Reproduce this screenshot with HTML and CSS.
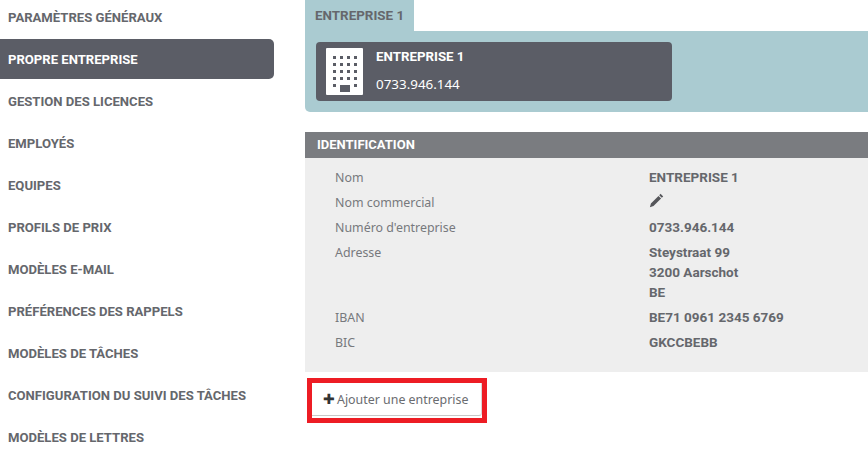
FILE: index.html
```html
<!DOCTYPE html>
<html lang="fr">
<head>
    <meta charset="UTF-8">
    <meta name="viewport" content="width=device-width, initial-scale=1.0">
    <title>Propre entreprise</title>
    <link rel="stylesheet" href="styles.css">
</head>
<body>
    <nav class="sidebar">
        <a class="nav-item">PARAMÈTRES GÉNÉRAUX</a>
        <a class="nav-item active">PROPRE ENTREPRISE</a>
        <a class="nav-item">GESTION DES LICENCES</a>
        <a class="nav-item">EMPLOYÉS</a>
        <a class="nav-item">EQUIPES</a>
        <a class="nav-item">PROFILS DE PRIX</a>
        <a class="nav-item">MODÈLES E-MAIL</a>
        <a class="nav-item">PRÉFÉRENCES DES RAPPELS</a>
        <a class="nav-item">MODÈLES DE TÂCHES</a>
        <a class="nav-item">CONFIGURATION DU SUIVI DES TÂCHES</a>
        <a class="nav-item">MODÈLES DE LETTRES</a>
    </nav>

    <main class="content">
        <div class="tab">ENTREPRISE 1</div>
        <div class="tab-panel">
            <div class="company-card">
                <svg class="building" width="37" height="47" viewBox="0 0 37 47">
                    <rect width="37" height="47" rx="1" fill="#fff"/>
                    <g fill="#5b5d66">
                        <rect x="7" y="8" width="3" height="3"/><rect x="14" y="8" width="3" height="3"/><rect x="21" y="8" width="3" height="3"/><rect x="28" y="8" width="3" height="3"/>
                        <rect x="7" y="15" width="3" height="3"/><rect x="14" y="15" width="3" height="3"/><rect x="21" y="15" width="3" height="3"/><rect x="28" y="15" width="3" height="3"/>
                        <rect x="7" y="22" width="3" height="3"/><rect x="14" y="22" width="3" height="3"/><rect x="21" y="22" width="3" height="3"/><rect x="28" y="22" width="3" height="3"/>
                        <rect x="7" y="29" width="3" height="3"/><rect x="14" y="29" width="3" height="3"/><rect x="21" y="29" width="3" height="3"/><rect x="28" y="29" width="3" height="3"/>
                        <rect x="7" y="36" width="3" height="3"/><rect x="28" y="36" width="3" height="3"/>
                        <rect x="14" y="37" width="10" height="7"/>
                    </g>
                </svg>
                <div class="company-text">
                    <div class="company-name">ENTREPRISE 1</div>
                    <div class="company-number">0733.946.144</div>
                </div>
            </div>
        </div>

        <section class="identification">
            <h3 class="section-title">IDENTIFICATION</h3>
            <div class="section-body">
                <div class="row"><span class="label">Nom</span><span class="value">ENTREPRISE 1</span></div>
                <div class="row">
                    <span class="label">Nom commercial</span>
                    <span class="value">
                        <svg class="pencil" width="15" height="15" viewBox="0 0 15 15">
                            <path d="M11.6 0.8l2.6 2.6-1.4 1.4-2.6-2.6zM9.5 2.9l2.6 2.6-7.6 7.6-3.6 1.1 1-3.7z" fill="#55565a"/>
                        </svg>
                    </span>
                </div>
                <div class="row"><span class="label">Numéro d'entreprise</span><span class="value">0733.946.144</span></div>
                <div class="row address">
                    <span class="label">Adresse</span>
                    <span class="value">Steystraat 99<br>3200 Aarschot<br>BE</span>
                </div>
                <div class="row"><span class="label">IBAN</span><span class="value">BE71 0961 2345 6769</span></div>
                <div class="row"><span class="label">BIC</span><span class="value">GKCCBEBB</span></div>
            </div>
        </section>

        <div class="highlight">
            <button class="add-btn"><span class="plus">✚</span>Ajouter une entreprise</button>
        </div>
    </main>
</body>
</html>
```

FILE: styles.css
```css
html, body {
    height: 100%;
}
body {
    margin: 0;
    display: flex;
    overflow: hidden;
    background: #fff;
    font-family: "Noto Sans", Roboto, sans-serif;
    font-size: 12.4px;
    color: #6a6c70;
}
.sidebar {
    width: 274px;
    flex-shrink: 0;
    display: flex;
    flex-direction: column;
    gap: 2px;
}
.nav-item {
    display: block;
    flex-shrink: 0;
    height: 40px;
    line-height: 41px;
    padding-left: 8px;
    font-family: Roboto, sans-serif;
    font-size: 13.1px;
    font-weight: 700;
    color: #65676c;
}
.nav-item:first-child {
    height: 37px;
    line-height: 35px;
}
.nav-item.active {
    background: #5b5d66;
    color: #fff;
    border-radius: 0 5px 5px 0;
}
.content {
    width: 563px;
    flex-shrink: 0;
    margin-left: 31px;
}
.tab {
    width: 109px;
    height: 31px;
    box-sizing: border-box;
    padding-left: 10px;
    line-height: 32px;
    background: #aacbd1;
    font-family: Roboto, sans-serif;
    font-weight: 700;
    font-size: 13.4px;
    color: #65676c;
}
.tab-panel {
    height: 81px;
    box-sizing: border-box;
    padding: 11px;
    background: #aacbd1;
    border-radius: 0 0 0 5px;
}
.company-card {
    width: 356px;
    height: 59px;
    box-sizing: border-box;
    padding: 6px 10px;
    display: flex;
    gap: 13px;
    background: #5b5d66;
    border-radius: 4px;
    color: #fff;
}
.company-text {
    display: flex;
    flex-direction: column;
    gap: 11px;
    padding-top: 1px;
}
.company-name {
    font-family: Roboto, sans-serif;
    font-size: 13.3px;
    font-weight: 700;
    line-height: 16px;
}
.company-number {
    font-size: 13.4px;
    line-height: 16px;
}
.identification {
    margin-top: 20px;
}
.section-title {
    margin: 0;
    height: 26px;
    line-height: 26px;
    padding-left: 12px;
    background: #7a7c80;
    color: #fff;
    font-family: Roboto, sans-serif;
    font-size: 13px;
    font-weight: 700;
}
.section-body {
    height: 214px;
    box-sizing: border-box;
    padding-top: 7px;
    background: #eeeeee;
}
.row {
    display: flex;
    min-height: 25px;
    line-height: 25px;
}
.label {
    width: 314px;
    margin-left: 30px;
    flex-shrink: 0;
    color: #77797d;
}
.value {
    font-family: Roboto, sans-serif;
    font-weight: 700;
    font-size: 13.5px;
    color: #65676c;
}
.address {
    height: 65px;
}
.address .value {
    line-height: 20px;
    padding-top: 2px;
}
.pencil {
    vertical-align: -1px;
}
.highlight {
    width: 180px;
    height: 45px;
    box-sizing: border-box;
    margin: 6px 0 0 2px;
    border: 5px solid #ed1c24;
}
.add-btn {
    display: block;
    width: 170px;
    height: 33px;
    padding: 0 0 0 11px;
    text-align: left;
    background: #fff;
    border: none;
    border-bottom: 1px solid #c8c8c8;
    border-right: 1px solid #d8d8d8;
    border-radius: 0 0 3px 0;
    font-family: "Noto Sans", Roboto, sans-serif;
    font-size: 12.4px;
    color: #6a6c70;
}
.plus {
    margin-right: 2px;
    color: #333;
    font-size: 13.5px;
}
```
